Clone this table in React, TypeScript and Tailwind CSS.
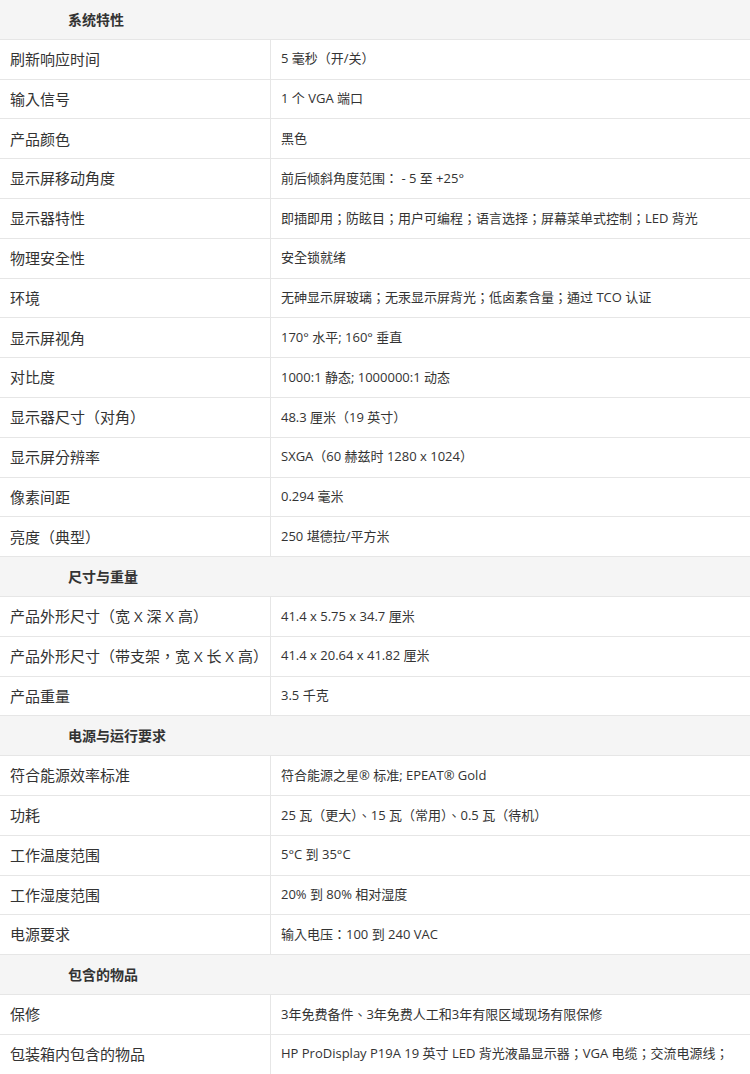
type Row = { label: string; value: string } | { section: string };

const rows: Row[] = [
  { section: '系统特性' },
  { label: '刷新响应时间', value: '5 毫秒（开/关）' },
  { label: '输入信号', value: '1 个 VGA 端口' },
  { label: '产品颜色', value: '黑色' },
  { label: '显示屏移动角度', value: '前后倾斜角度范围： - 5 至 +25°' },
  { label: '显示器特性', value: '即插即用；防眩目；用户可编程；语言选择；屏幕菜单式控制；LED 背光' },
  { label: '物理安全性', value: '安全锁就绪' },
  { label: '环境', value: '无砷显示屏玻璃；无汞显示屏背光；低卤素含量；通过 TCO 认证' },
  { label: '显示屏视角', value: '170° 水平; 160° 垂直' },
  { label: '对比度', value: '1000:1 静态; 1000000:1 动态' },
  { label: '显示器尺寸（对角）', value: '48.3 厘米（19 英寸）' },
  { label: '显示屏分辨率', value: 'SXGA（60 赫兹时 1280 x 1024）' },
  { label: '像素间距', value: '0.294 毫米' },
  { label: '亮度（典型）', value: '250 堪德拉/平方米' },
  { section: '尺寸与重量' },
  { label: '产品外形尺寸（宽 X 深 X 高）', value: '41.4 x 5.75 x 34.7 厘米' },
  { label: '产品外形尺寸（带支架，宽 X 长 X 高）', value: '41.4 x 20.64 x 41.82 厘米' },
  { label: '产品重量', value: '3.5 千克' },
  { section: '电源与运行要求' },
  { label: '符合能源效率标准', value: '符合能源之星® 标准; EPEAT® Gold' },
  { label: '功耗', value: '25 瓦（更大）、15 瓦（常用）、0.5 瓦（待机）' },
  { label: '工作温度范围', value: '5°C 到 35°C' },
  { label: '工作湿度范围', value: '20% 到 80% 相对湿度' },
  { label: '电源要求', value: '输入电压：100 到 240 VAC' },
  { section: '包含的物品' },
  { label: '保修', value: '3年免费备件、3年免费人工和3年有限区域现场有限保修' },
  { label: '包装箱内包含的物品', value: 'HP ProDisplay P19A 19 英寸 LED 背光液晶显示器；VGA 电缆；交流电源线；' },
];

const App = () => {
  return (
    <div
      className="w-[750px] bg-white text-[#333333]"
      style={{ fontFamily: '"Open Sans", "Noto Sans CJK TC", sans-serif' }}
    >
      {rows.map((row, i) =>
        'section' in row ? (
          <div
            key={i}
            className="h-[39.8px] flex items-center bg-[#f5f5f5] border-b border-[#e6e6e6] pl-[68px] text-[14px] font-bold"
          >
            {row.section}
          </div>
        ) : (
          <div key={i} className="h-[39.8px] flex border-b border-[#e6e6e6]">
            <div className="w-[271px] shrink-0 flex items-center pl-[10px] border-r border-[#e6e6e6] text-[15px] whitespace-nowrap">
              {row.label}
            </div>
            <div className="flex-1 flex items-center pl-[10px] text-[13px] whitespace-nowrap">
              {row.value}
            </div>
          </div>
        )
      )}
    </div>
  );
};

export default App;
